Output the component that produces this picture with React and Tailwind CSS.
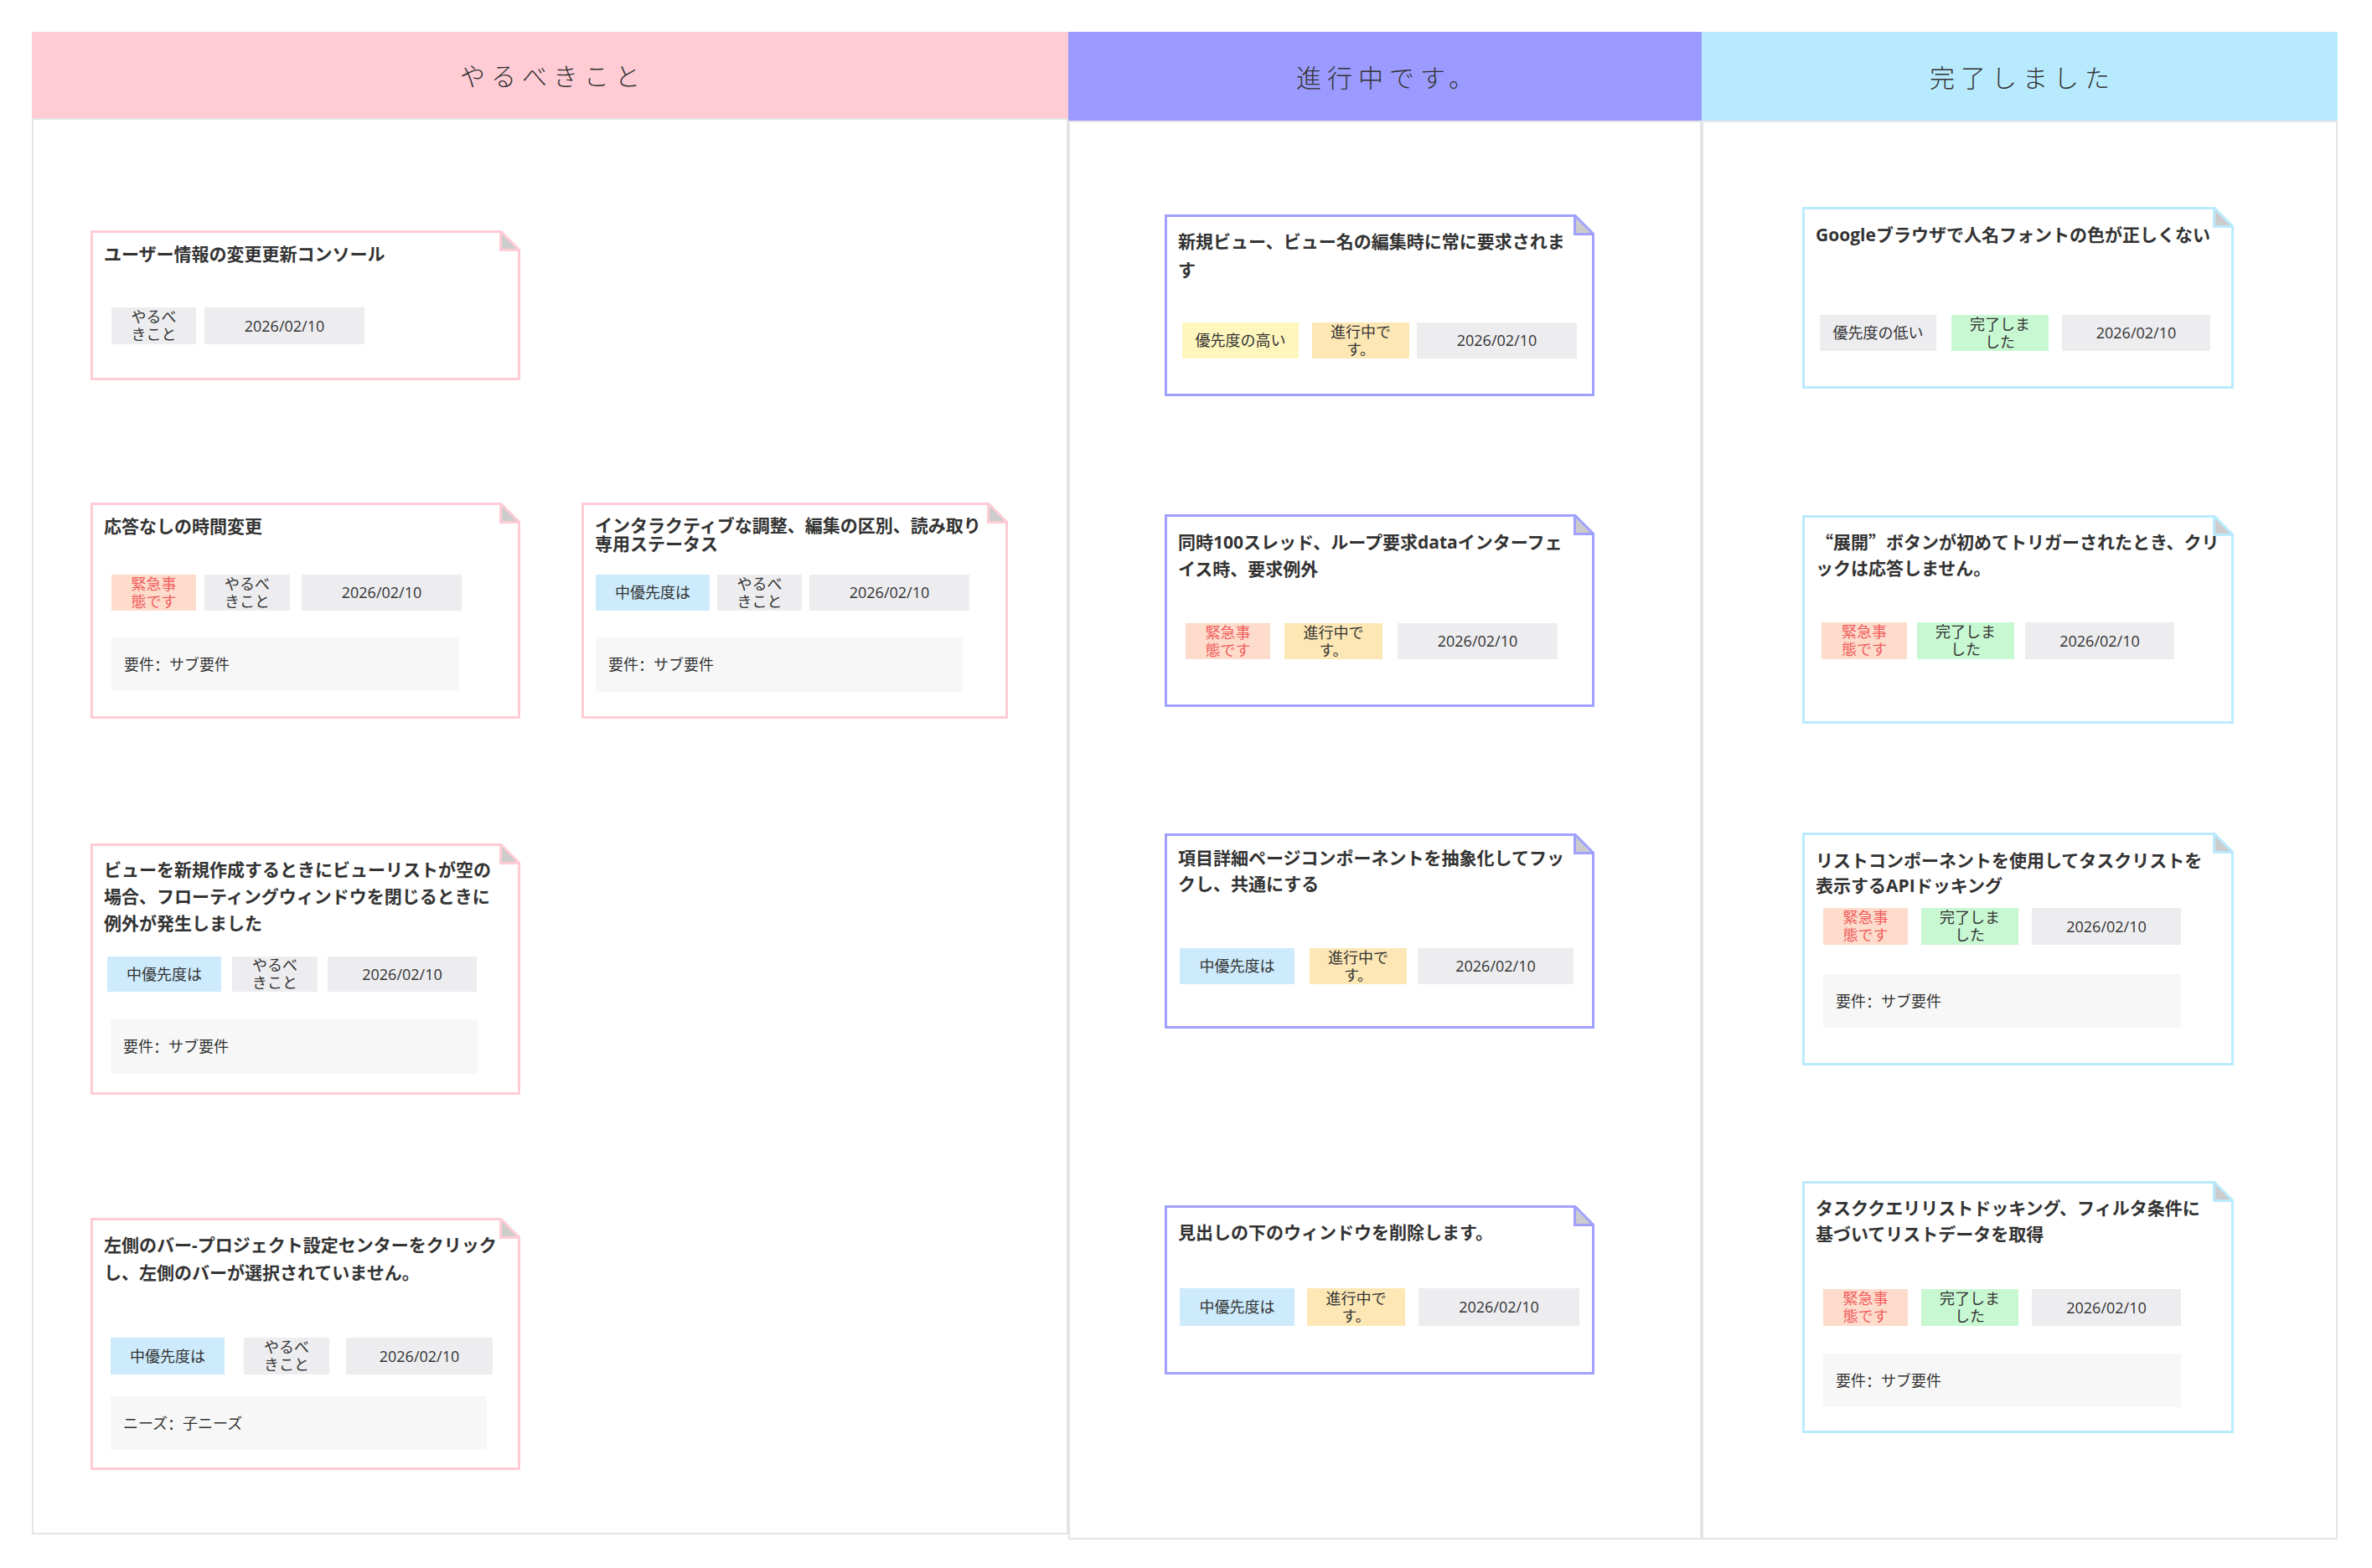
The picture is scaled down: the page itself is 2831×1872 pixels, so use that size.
const tagStyles = {
    red: "bg-[#fddccc] text-[#f15b5b]",
    gray: "bg-[#ededf0] text-[#333]",
    blue: "bg-[#cdebfc] text-[#333]",
    yellow: "bg-[#fef6bd] text-[#333]",
    orange: "bg-[#fde7b5] text-[#333]",
    green: "bg-[#c8f8d2] text-[#333]",
}

const DATE = "2026/02/10"

// full-width punctuation drawn with the SC face (colon on the left, curly quotes full width)
const Punct = ({ children }) => (
    <span className="font-['Noto_Sans_CJK_SC',sans-serif]">{children}</span>
)

const todoTag = { kind: "gray", lines: ["やるべ", "きこと"] }
const urgent = { kind: "red", lines: ["緊急事", "態です"] }
const midPrio = { kind: "blue", lines: ["中優先度は"] }
const doingTag = { kind: "orange", lines: ["進行中で", "す。"] }
const doneTag = { kind: "green", lines: ["完了しま", "した"] }
const dateTag = { kind: "gray", lines: [DATE] }

// ─── data ───

const todoRows = [
    {
        gap: "mt-[132px]",
        cards: [
            {
                box: "w-[513px] h-[179px]",
                head: "h-[89px] pt-[9px] leading-[32px]",
                row: "pl-[22px] h-[44px]",
                title: ["ユーザー情報の変更更新コンソール"],
                tags: [
                    { ...todoTag, cls: "w-[101px]" },
                    { ...dateTag, cls: "w-[191px] ml-[10px]" },
                ],
            },
        ],
    },
    {
        gap: "mt-[146px]",
        cards: [
            {
                box: "w-[513px] h-[258px]",
                head: "h-[83px] pt-[9px] leading-[32px]",
                row: "pl-[22px] h-[43px]",
                title: ["応答なしの時間変更"],
                tags: [
                    { ...urgent, cls: "w-[101px]" },
                    { ...todoTag, cls: "w-[102px] ml-[10px]" },
                    { ...dateTag, cls: "w-[191px] ml-[14px]" },
                ],
                req: { label: "要件", value: "サブ要件", cls: "w-[415px] h-[64px] ml-[22px] mt-[32px]" },
            },
            {
                box: "w-[509px] h-[258px]",
                head: "h-[83px] pt-[13px] leading-[22px]",
                row: "pl-[14px] h-[43px]",
                title: ["インタラクティブな調整、編集の区別、読み取り", "専用ステータス"],
                tags: [
                    { ...midPrio, cls: "w-[136px]" },
                    { ...todoTag, cls: "w-[101px] ml-[9px]" },
                    { ...dateTag, cls: "w-[191px] ml-[9px]" },
                ],
                req: { label: "要件", value: "サブ要件", cls: "w-[438px] h-[65px] ml-[14px] mt-[32px]" },
            },
        ],
    },
    {
        gap: "mt-[149px]",
        cards: [
            {
                box: "w-[513px] h-[300px]",
                head: "h-[132px] pt-[12px] leading-[32px]",
                row: "pl-[17px] h-[42px]",
                title: [
                    "ビューを新規作成するときにビューリストが空の",
                    "場合、フローティングウィンドウを閉じるときに",
                    "例外が発生しました",
                ],
                tags: [
                    { ...midPrio, cls: "w-[136px]" },
                    { ...todoTag, cls: "w-[102px] ml-[13px]" },
                    { ...dateTag, cls: "w-[178px] ml-[12px]" },
                ],
                req: { label: "要件", value: "サブ要件", cls: "w-[438px] h-[65px] ml-[21px] mt-[33px]" },
            },
        ],
    },
    {
        gap: "mt-[147px]",
        cards: [
            {
                box: "w-[513px] h-[301px]",
                head: "h-[140px] pt-[13px] leading-[33px]",
                row: "pl-[21px] h-[44px]",
                title: ["左側のバー-プロジェクト設定センターをクリック", "し、左側のバーが選択されていません。"],
                tags: [
                    { ...midPrio, cls: "w-[136px]" },
                    { ...todoTag, cls: "w-[102px] ml-[23px]" },
                    { ...dateTag, cls: "w-[175px] ml-[20px]" },
                ],
                req: { label: "ニーズ", value: "子ニーズ", cls: "w-[449px] h-[64px] ml-[21px] mt-[26px]" },
            },
        ],
    },
]

const doingCards = [
    {
        gap: "mt-[110px]",
        box: "w-[513px] h-[217px]",
        head: "h-[126px] pt-[12px] leading-[34px]",
        row: "pl-[18px] h-[43px]",
        title: ["新規ビュー、ビュー名の編集時に常に要求されま", "す"],
        tags: [
            { kind: "yellow", lines: ["優先度の高い"], cls: "w-[139px]" },
            { ...doingTag, cls: "w-[116px] ml-[16px]" },
            { ...dateTag, cls: "w-[191px] ml-[9px]" },
        ],
    },
    {
        gap: "mt-[141px]",
        box: "w-[513px] h-[230px]",
        head: "h-[127px] pt-[14px] leading-[32px]",
        row: "pl-[22px] h-[43px]",
        title: ["同時100スレッド、ループ要求dataインターフェ", "イス時、要求例外"],
        tags: [
            { ...urgent, cls: "w-[101px]" },
            { ...doingTag, cls: "w-[117px] ml-[17px]" },
            { ...dateTag, cls: "w-[191px] ml-[18px]" },
        ],
    },
    {
        gap: "mt-[151px]",
        box: "w-[513px] h-[233px]",
        head: "h-[134px] pt-[11px] leading-[31px]",
        row: "pl-[15px] h-[43px]",
        title: ["項目詳細ページコンポーネントを抽象化してフッ", "クし、共通にする"],
        tags: [
            { ...midPrio, cls: "w-[137px]" },
            { ...doingTag, cls: "w-[116px] ml-[18px]" },
            { ...dateTag, cls: "w-[186px] ml-[13px]" },
        ],
    },
    {
        gap: "mt-[211px]",
        box: "w-[513px] h-[202px]",
        head: "h-[96px] pt-[13px] leading-[32px]",
        row: "pl-[15px] h-[45px]",
        title: ["見出しの下のウィンドウを削除します。"],
        tags: [
            { ...midPrio, cls: "w-[137px]" },
            { ...doingTag, cls: "w-[117px] ml-[15px]" },
            { ...dateTag, cls: "w-[192px] ml-[16px]" },
        ],
    },
]

const doneCards = [
    {
        gap: "mt-[101px]",
        box: "w-[515px] h-[217px]",
        head: "h-[126px] pt-[14px] leading-[32px]",
        row: "pl-[18px] h-[43px]",
        title: ["Googleブラウザで人名フォントの色が正しくない"],
        tags: [
            { kind: "gray", lines: ["優先度の低い"], cls: "w-[139px]" },
            { ...doneTag, cls: "w-[116px] ml-[18px]" },
            { ...dateTag, cls: "w-[177px] ml-[16px]" },
        ],
    },
    {
        gap: "mt-[151px]",
        box: "w-[515px] h-[249px]",
        head: "h-[125px] pt-[13px] leading-[31px]",
        row: "pl-[20px] h-[44px]",
        title: [
            <><Punct>“</Punct>展開<Punct>”</Punct>ボタンが初めてトリガーされたとき、クリ</>,
            "ックは応答しません。",
        ],
        tags: [
            { ...urgent, cls: "w-[102px]" },
            { ...doneTag, cls: "w-[116px] ml-[12px]" },
            { ...dateTag, cls: "w-[178px] ml-[13px]" },
        ],
    },
    {
        gap: "mt-[130px]",
        box: "w-[515px] h-[278px]",
        head: "h-[87px] pt-[15px] leading-[30px]",
        row: "pl-[22px] h-[44px]",
        title: ["リストコンポーネントを使用してタスクリストを", "表示するAPIドッキング"],
        tags: [
            { ...urgent, cls: "w-[101px]" },
            { ...doneTag, cls: "w-[116px] ml-[16px]" },
            { ...dateTag, cls: "w-[178px] ml-[16px]" },
        ],
        req: { label: "要件", value: "サブ要件", cls: "w-[427px] h-[64px] ml-[22px] mt-[35px]" },
    },
    {
        gap: "mt-[138px]",
        box: "w-[515px] h-[301px]",
        head: "h-[126px] pt-[14px] leading-[31px]",
        row: "pl-[22px] h-[44px]",
        title: ["タスククエリリストドッキング、フィルタ条件に", "基づいてリストデータを取得"],
        tags: [
            { ...urgent, cls: "w-[101px]" },
            { ...doneTag, cls: "w-[116px] ml-[16px]" },
            { ...dateTag, cls: "w-[178px] ml-[16px]" },
        ],
        req: { label: "要件", value: "サブ要件", cls: "w-[427px] h-[64px] ml-[22px] mt-[33px]" },
    },
]

// ─── FoldCorner ───

const FoldCorner = ({ color }) => (
    <svg
        width="25"
        height="25"
        viewBox="0 0 25 25"
        className="absolute -top-[3px] -right-[3px]"
    >
        <polygon points="0,0 25,0 25,25" fill="#ffffff" />
        <polygon points="1.5,1.5 1.5,23.5 23.5,23.5" fill="#cccccc" />
        <path d="M1.5 0 V23.5 H25" fill="none" stroke={color} strokeWidth="3" />
        <path d="M0.5 0 L25 24.5" fill="none" stroke={color} strokeWidth="3" />
    </svg>
)

// ─── Tag ───

const Tag = ({ tag }) => (
    <div className={`flex shrink-0 flex-col items-center justify-center text-center text-[18px] leading-[21px] ${tag.cls} ${tagStyles[tag.kind]}`}>
        {tag.lines.map((l, i) => (
            <span key={i} className="whitespace-nowrap">{l}</span>
        ))}
    </div>
)

// ─── Card ───

const Card = ({ card, border, fold }) => (
    <div className={`relative flex shrink-0 flex-col border-[3px] bg-white ${border} ${card.box}`}>
        <div className={`shrink-0 pl-[13px] text-[21px] font-bold text-[#333] ${card.head}`}>
            {card.title.map((l, i) => (
                <div key={i} className="whitespace-nowrap">{l}</div>
            ))}
        </div>

        <div className={`flex shrink-0 ${card.row}`}>
            {card.tags.map((t, i) => (
                <Tag key={i} tag={t} />
            ))}
        </div>

        {card.req && (
            <div className={`flex shrink-0 items-center bg-[#f7f7f7] pl-[15px] text-[18px] text-[#333] ${card.req.cls}`}>
                {card.req.label}<Punct>：</Punct>{card.req.value}
            </div>
        )}

        <FoldCorner color={fold} />
    </div>
)

// ─── Column ───

const Column = ({ title, className, header, body, children }) => (
    <div className={`flex shrink-0 flex-col ${className}`}>
        <div className={`flex items-center justify-center ${header}`}>
            <span className="pl-[7px] font-['Noto_Sans_CJK_JP',sans-serif] text-[30px] font-light tracking-[7px] text-[#333]">
                {title}
            </span>
        </div>
        <div className={`flex flex-col border-2 border-[#e4e4e4] bg-white ${body}`}>
            {children}
        </div>
    </div>
)

export default function App() {
    return (
        <div className="h-[1872px] w-full overflow-hidden bg-white font-['Open_Sans','Noto_Sans_CJK_JP',sans-serif]">
            <div className="flex items-start pl-[38px] pt-[38px]">
                <Column
                    title="やるべきこと"
                    className="w-[1237px]"
                    header="h-[103px] bg-[#ffccd5]"
                    body="h-[1691px] pl-[68px]"
                >
                    {todoRows.map((row, i) => (
                        <div key={i} className={`flex gap-[73px] ${row.gap}`}>
                            {row.cards.map((c, j) => (
                                <Card key={j} card={c} border="border-[#ffccd5]" fold="#ffccd5" />
                            ))}
                        </div>
                    ))}
                </Column>

                <Column
                    title="進行中です。"
                    className="w-[756px]"
                    header="h-[106px] bg-[#9b9bff]"
                    body="h-[1694px] pl-[113px]"
                >
                    {doingCards.map((c, i) => (
                        <div key={i} className={c.gap}>
                            <Card card={c} border="border-[#a0a0ff]" fold="#a0a0ff" />
                        </div>
                    ))}
                </Column>

                <Column
                    title="完了しました"
                    className="w-[759px]"
                    header="h-[106px] bg-[#b8eafe]"
                    body="h-[1694px] pl-[118px]"
                >
                    {doneCards.map((c, i) => (
                        <div key={i} className={c.gap}>
                            <Card card={c} border="border-[#b9eafe]" fold="#b9eafe" />
                        </div>
                    ))}
                </Column>
            </div>
        </div>
    )
}
